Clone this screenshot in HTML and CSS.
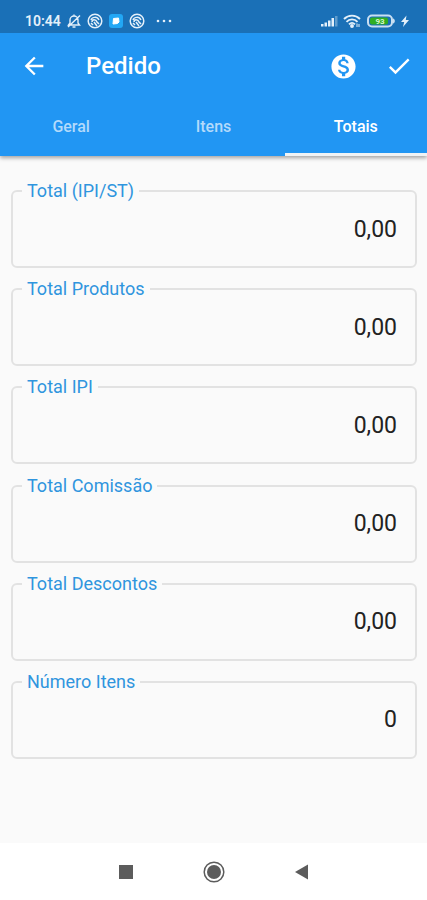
FILE: index.html
```html
<!DOCTYPE html>
<html lang="pt-BR">
<head>
<meta charset="utf-8">
<meta name="viewport" content="width=device-width, initial-scale=1">
<title>Pedido</title>
<link rel="stylesheet" href="styles.css">
</head>
<body>
<header class="header">
  <div class="status">
    <span class="clock">10:44</span>
    <svg width="16" height="16" viewBox="0 0 16 16" fill="none" stroke="currentColor" stroke-width="1.400"><path d="M2.500 12h11l-1.500-2V7a4 4 0 0 0-8 0v3zM6.500 14h3M8 3V1.500M2 14 14 2.500"/></svg>
    <svg width="16" height="16" viewBox="0 0 16 16" fill="none" stroke="currentColor" stroke-width="1.500"><circle cx="8" cy="8" r="6.800"/><path d="M4 7c1-3 6-4 8 0M5 9c0-3 4-3 5 0l2 2M7 9l3 4M4 10l2 2"/></svg>
    <svg width="16" height="16" viewBox="0 0 16 16"><rect x="1" y="1" width="14" height="14" rx="3" fill="#22a7f5"/><path d="M5.500 5.500 10.500 5 11 9 9.500 10.500 5 11z" fill="#fff" stroke="#fff" stroke-linejoin="round"/></svg>
    <svg width="16" height="16" viewBox="0 0 16 16" fill="none" stroke="currentColor" stroke-width="1.500"><circle cx="8" cy="8" r="6.800"/><path d="M4 7c1-3 6-4 8 0M5 9c0-3 4-3 5 0l2 2M7 9l3 4M4 10l2 2"/></svg>
    <svg class="more" width="16" height="16" viewBox="0 0 16 16" fill="currentColor"><circle cx="2" cy="8" r="1.300"/><circle cx="8" cy="8" r="1.300"/><circle cx="14" cy="8" r="1.300"/></svg>
    <span class="spacer"></span>
    <svg width="18" height="16" viewBox="0 0 18 16" fill="currentColor"><path d="M1 11h2.500v2.500H1zM4.500 9.500H7v4H4.500zM8 7.500h2.500v6H8zM11.500 5h2.500v8.500h-2.500z"/><path d="M15 3h2.500v10.500H15z" opacity=".35"/></svg>
    <svg width="18" height="16" viewBox="0 0 18 16" fill="none" stroke="currentColor" stroke-width="1.900"><path d="M1 6c4.500-4.500 11.500-4.500 16 0M3.500 8.800c3-3.200 8-3.200 11 0M6 11.400c2-2 4-2 6 0"/><circle cx="9" cy="13" r="1" fill="currentColor"/><path d="M14 14v-3.500M16 11v3" stroke-width="1"/></svg>
    <svg width="30" height="16" viewBox="0 0 30 16"><rect x="2" y="2.500" width="24" height="11" rx="4" fill="#1a6fb6" stroke="#c9dff2" stroke-width="2"/><path d="M27 5.500c2.500.5 2.500 4.500 0 5z" fill="#c9dff2"/><rect x="4" y="4.500" width="18" height="7" rx="2" fill="#2fae22"/><text class="charge" x="14" y="11" text-anchor="middle">93</text></svg>
    <svg width="8" height="16" viewBox="0 0 8 16" fill="currentColor"><path d="M5.500 2.500 0 9H3.200L2 14 8 7H4.800z"/></svg>
  </div>
  <div class="appbar">
    <button class="icon" aria-label="Voltar"><svg width="28" height="28" viewBox="0 0 24 24" fill="currentColor"><path d="M20 11H7.830l5.590-5.590L12 4l-8 8 8 8 1.410-1.410L7.830 13H20z"/></svg></button>
    <h1 class="title">Pedido</h1>
    <button class="icon" aria-label="Pagamento"><svg width="29" height="29" viewBox="0 0 24 24" fill="currentColor"><path d="M12 2C6.480 2 2 6.480 2 12s4.480 10 10 10 10-4.480 10-10S17.520 2 12 2zm1.410 16.090V20h-2.670v-1.930c-1.710-.36-3.160-1.460-3.270-3.400h1.960c.1 1.050.82 1.870 2.650 1.870 1.960 0 2.400-.98 2.400-1.590 0-.83-.44-1.610-2.670-2.140-2.480-.6-4.180-1.620-4.180-3.670 0-1.720 1.390-2.840 3.110-3.210V4h2.670v1.950c1.860.45 2.790 1.860 2.850 3.390H14.300c-.05-1.110-.64-1.870-2.220-1.870-1.500 0-2.400.68-2.400 1.640 0 .84.65 1.390 2.670 1.910s4.180 1.390 4.180 3.910c-.01 1.830-1.380 2.830-3.120 3.160z"/></svg></button>
    <button class="icon" aria-label="Confirmar"><svg width="28" height="28" viewBox="0 0 24 24" fill="currentColor"><path d="M9 16.170 4.830 12l-1.420 1.410L9 19 21 7l-1.410-1.410z"/></svg></button>
  </div>
  <nav class="tabs">
    <button class="tab">Geral</button>
    <button class="tab">Itens</button>
    <button class="tab active" aria-current="page">Totais</button>
  </nav>
</header>
<main class="totals">
  <fieldset class="field"><legend><label for="ipist">Total (IPI/ST)</label></legend><input id="ipist" value="0,00" readonly></fieldset>
  <fieldset class="field"><legend><label for="produtos">Total Produtos</label></legend><input id="produtos" value="0,00" readonly></fieldset>
  <fieldset class="field"><legend><label for="ipi">Total IPI</label></legend><input id="ipi" value="0,00" readonly></fieldset>
  <fieldset class="field"><legend><label for="comissao">Total Comissão</label></legend><input id="comissao" value="0,00" readonly></fieldset>
  <fieldset class="field"><legend><label for="descontos">Total Descontos</label></legend><input id="descontos" value="0,00" readonly></fieldset>
  <fieldset class="field"><legend><label for="itens">Número Itens</label></legend><input id="itens" value="0" readonly></fieldset>
</main>
<footer class="navbar">
  <button class="nav" aria-label="Recentes"><svg width="24" height="24" viewBox="0 0 24 24" fill="currentColor"><path d="M5 5h14v14H5z"/></svg></button>
  <button class="nav" aria-label="Início"><svg width="24" height="24" viewBox="0 0 24 24"><circle cx="12" cy="12" r="9.800" fill="none" stroke="currentColor" stroke-width="1.500"/><circle cx="12" cy="12" r="7" fill="currentColor"/></svg></button>
  <button class="nav" aria-label="Voltar ao anterior"><svg width="24" height="24" viewBox="0 0 24 24" fill="currentColor"><path d="M18 4.500v15L5 12z"/></svg></button>
</footer>
</body>
</html>
```
FILE: styles.css
```css
* {
  box-sizing: border-box;
}

body {
  margin: 0;
  min-height: 100vh;
  display: flex;
  flex-direction: column;
  background: #fafafa;
  font-family: Roboto, "Liberation Sans", sans-serif;
}

button {
  border: 0;
  padding: 0;
  background: none;
  color: inherit;
  font: inherit;
}

svg {
  display: block;
}

.header {
  background: #2196f3;
  color: #fff;
  box-shadow: 0 2px 4px rgba(0, 0, 0, 0.35);
}

.status {
  display: flex;
  align-items: center;
  gap: 5px;
  height: 33px;
  padding: 8px 18px 0 25px;
  background: #1a70b7;
  color: #e4f0fa;
}

.clock {
  font-size: 14px;
  font-weight: 600;
}

.more {
  margin-left: 6px;
}

.spacer {
  flex: 1;
}

.charge {
  fill: #d9f5c8;
  font-size: 8px;
  font-weight: 700;
}

.appbar {
  display: flex;
  align-items: center;
  height: 66px;
  padding: 0 0 0 6px;
}

.icon {
  display: grid;
  place-items: center;
  width: 56px;
  height: 56px;
}

.title {
  flex: 1;
  margin: 0;
  padding-left: 24px;
  font-size: 24px;
  font-weight: 500;
}

.tabs {
  display: grid;
  grid-template-columns: repeat(3, 1fr);
  height: 57px;
}

.tab {
  border-bottom: 3px solid transparent;
  color: #b3dafb;
  font-size: 16px;
  font-weight: 500;
}

.active {
  border-bottom-color: #f0f3f5;
  color: #fff;
}

.totals {
  flex: 1;
  display: flex;
  flex-direction: column;
  justify-content: space-between;
  gap: 11px;
  padding: 25px 10px 84px 11px;
}

.field {
  min-width: 0;
  margin: 0;
  padding: 0 18px 19px 9px;
  border: 2px solid #e2e2e2;
  border-radius: 6px;
}

.field legend {
  padding: 0 5px;
  color: #2f95de;
  font-size: 17px;
  line-height: 20px;
}

.field input {
  display: block;
  width: 100%;
  height: 36px;
  margin-top: 10px;
  padding: 0;
  border: 0;
  background: none;
  color: #222;
  font: inherit;
  font-size: 23px;
  text-align: right;
}

.field label {
  font-size: 18px;
}

.navbar {
  display: flex;
  justify-content: center;
  gap: 64px;
  padding: 17px 0 16px;
  background: #fff;
  color: #5c5c5c;
}
```
